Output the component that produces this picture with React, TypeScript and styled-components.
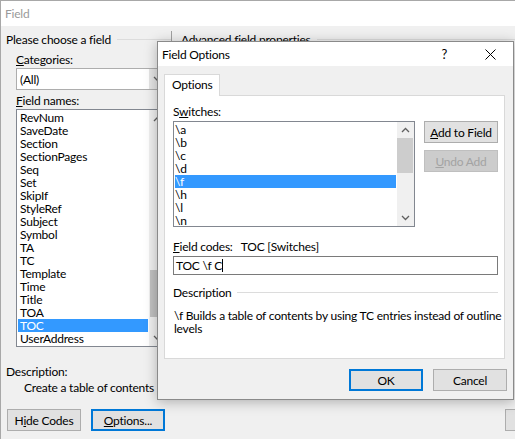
import styled, { createGlobalStyle } from "styled-components";

const GlobalStyle = createGlobalStyle`
  html, body {
    margin: 0;
    padding: 0;
    overflow: hidden;
  }
  body {
    font-family: Lato, "Noto Sans", sans-serif;
    font-size: 12px;
    letter-spacing: -0.22px;
    color: #000;
  }
  * {
    box-sizing: border-box;
  }
`;

const fieldNames = [
  "RevNum",
  "SaveDate",
  "Section",
  "SectionPages",
  "Seq",
  "Set",
  "SkipIf",
  "StyleRef",
  "Subject",
  "Symbol",
  "TA",
  "TC",
  "Template",
  "Time",
  "Title",
  "TOA",
  "TOC",
  "UserAddress",
];

const switches = ["\\a", "\\b", "\\c", "\\d", "\\f", "\\h", "\\l", "\\n"];

export default function App() {
  return (
    <>
      <GlobalStyle />
      <Window>
        <TitleBar $inactive>Field</TitleBar>
        <WindowBody>
          <Main>
            <LeftCol>
              <GroupHeader>
                <span>Please choose a field</span>
                <GroupLine />
              </GroupHeader>
              <Indent>
                <Label $top={5}>
                  <u>C</u>ategories:
                </Label>
                <Combo>
                  <ComboText>(All)</ComboText>
                  <ComboButton>
                    <Chevron down />
                  </ComboButton>
                </Combo>
                <Label $top={3}>
                  <u>F</u>ield names:
                </Label>
                <FieldList>
                  <Items>
                    {fieldNames.map((name) => (
                      <Item key={name} $selected={name === "TOC"}>
                        {name}
                      </Item>
                    ))}
                  </Items>
                  <ListScroll>
                    <ScrollArrow>
                      <Chevron />
                    </ScrollArrow>
                    <FieldTrack>
                      <FieldThumb />
                    </FieldTrack>
                    <ScrollArrow>
                      <Chevron down />
                    </ScrollArrow>
                  </ListScroll>
                </FieldList>
              </Indent>
              <Label $top={17}>Description:</Label>
              <DescLine>Create a table of contents</DescLine>
            </LeftCol>
            <VSeparator />
            <RightCol>
              <GroupHeader>
                <span>Advanced field properties</span>
                <GroupLine />
              </GroupHeader>
            </RightCol>
          </Main>
          <BottomRow>
            <Button>
              H<u>i</u>de Codes
            </Button>
            <Button $default>
              <u>O</u>ptions...
            </Button>
            <Spacer />
            <Button />
          </BottomRow>
        </WindowBody>

        <Dialog>
          <DialogTitleBar>
            <span>Field Options</span>
            <TitleIcons>
              <HelpMark>?</HelpMark>
              <CloseIcon width="11" height="11" viewBox="0 0 11 11">
                <path d="M0.5 0.5 L10.5 10.5 M10.5 0.5 L0.5 10.5" stroke="#000" strokeWidth="1" />
              </CloseIcon>
            </TitleIcons>
          </DialogTitleBar>
          <DialogBody>
            <Tab>Options</Tab>
            <TabPanel>
              <Label>
                S<u>w</u>itches:
              </Label>
              <SwitchRow>
                <SwitchList>
                  <Items>
                    {switches.map((s) => (
                      <Item key={s} $selected={s === "\\f"} $wide>
                        {s}
                      </Item>
                    ))}
                  </Items>
                  <SwitchScroll>
                    <ScrollArrow $tall>
                      <Chevron />
                    </ScrollArrow>
                    <SwitchTrack>
                      <SwitchThumb />
                    </SwitchTrack>
                    <ScrollArrow $tall>
                      <Chevron down />
                    </ScrollArrow>
                  </SwitchScroll>
                </SwitchList>
                <SideButtons>
                  <Button>
                    <u>A</u>dd to Field
                  </Button>
                  <Button disabled>
                    <u>U</u>ndo Add
                  </Button>
                </SideButtons>
              </SwitchRow>
              <Label $top={12}>
                <u>F</u>ield codes:&nbsp;&nbsp; TOC [Switches]
              </Label>
              <CodeInput>
                TOC \f C<Caret />
              </CodeInput>
              <GroupHeader $top={10}>
                <span>Description</span>
                <GroupLine />
              </GroupHeader>
              <DescText>
                <div>\f Builds a table of contents by using TC entries instead of outline</div>
                <div>levels</div>
              </DescText>
            </TabPanel>
            <DialogFooter>
              <Button $default>OK</Button>
              <Button>Cancel</Button>
            </DialogFooter>
          </DialogBody>
        </Dialog>
      </Window>
    </>
  );
}

function Chevron({ down }: { down?: boolean }) {
  return (
    <svg width="9" height="6" viewBox="0 0 9 6">
      <path
        d={down ? "M1 1 L4.5 4.5 L8 1" : "M1 5 L4.5 1.5 L8 5"}
        fill="none"
        stroke="#606060"
        strokeWidth="1.3"
      />
    </svg>
  );
}

const Window = styled.div`
  position: relative;
  width: 515px;
  height: 439px;
  border-top: 1px solid #a8a8a8;
  border-left: 1px solid #a8a8a8;
  display: flex;
  flex-direction: column;
  overflow: hidden;
`;

const TitleBar = styled.div<{ $inactive?: boolean }>`
  height: 25px;
  line-height: 25px;
  padding-left: 4px;
  background: #fff;
  color: ${(p) => (p.$inactive ? "#9a9a9a" : "#000")};
`;

const WindowBody = styled.div`
  flex: 1;
  background: #f0f0f0;
  display: flex;
  flex-direction: column;
`;

const Main = styled.div`
  display: flex;
  padding-top: 6px;
`;

const LeftCol = styled.div`
  width: 170px;
  padding-left: 5px;
  flex-shrink: 0;
`;

const RightCol = styled.div`
  flex: 1;
  padding-left: 9px;
`;

const VSeparator = styled.div`
  width: 1px;
  background: #a0a0a0;
  margin-top: -1px;
  height: 60px;
`;

const GroupHeader = styled.div<{ $top?: number }>`
  display: flex;
  align-items: center;
  gap: 6px;
  height: 15px;
  line-height: 15px;
  margin-top: ${(p) => p.$top ?? 0}px;
  white-space: nowrap;
`;

const GroupLine = styled.div`
  flex: 1;
  border-top: 1px solid #dcdcdc;
`;

const Indent = styled.div`
  padding-left: 10px;
`;

const Label = styled.div<{ $top?: number }>`
  height: 15px;
  line-height: 15px;
  margin-top: ${(p) => p.$top ?? 0}px;
  white-space: nowrap;
`;

const Combo = styled.div`
  margin-top: 1px;
  width: 151px;
  height: 22px;
  border: 1px solid #adadad;
  background: #fff;
  display: flex;
  align-items: center;
`;

const ComboText = styled.div`
  flex: 1;
  padding-left: 3px;
`;

const ComboButton = styled.div`
  width: 17px;
  height: 100%;
  background: #e5e5e5;
  display: flex;
  align-items: center;
  justify-content: center;
`;

const FieldList = styled.div`
  margin-top: 1px;
  width: 151px;
  height: 238px;
  border: 1px solid #828790;
  background: #fff;
  display: flex;
`;

const Items = styled.div`
  flex: 1;
  padding: 1px 1px 0 1px;
`;

const Item = styled.div<{ $selected?: boolean; $wide?: boolean }>`
  height: 13px;
  line-height: 13px;
  padding-left: ${(p) => (p.$wide ? 0 : 2)}px;
  background: ${(p) => (p.$selected ? "#3399ff" : "transparent")};
  color: ${(p) => (p.$selected ? "#fff" : "#000")};
  white-space: nowrap;
`;

const ListScroll = styled.div`
  width: 17px;
  background: #f0f0f0;
  display: flex;
  flex-direction: column;
`;

const ScrollArrow = styled.div<{ $tall?: boolean }>`
  height: ${(p) => (p.$tall ? 16 : 17)}px;
  display: flex;
  align-items: center;
  justify-content: center;
`;

const FieldTrack = styled.div`
  flex: 1;
  position: relative;
`;

const FieldThumb = styled.div`
  position: absolute;
  left: 1px;
  right: 1px;
  top: 143px;
  height: 47px;
  background: #c1c1c1;
`;

const DescLine = styled.div`
  height: 15px;
  line-height: 15px;
  padding-left: 18px;
  margin-top: 1px;
  white-space: nowrap;
`;

const BottomRow = styled.div`
  display: flex;
  gap: 10px;
  padding-left: 6px;
  margin-top: 14px;
`;

const Spacer = styled.div`
  width: 320px;
  flex-shrink: 0;
`;

const Button = styled.button<{ $default?: boolean }>`
  width: 74px;
  height: 22px;
  flex-shrink: 0;
  padding: 0;
  font: inherit;
  letter-spacing: inherit;
  color: #000;
  background: #e1e1e1;
  border: ${(p) => (p.$default ? "2px solid #0078d7" : "1px solid #adadad")};
  white-space: nowrap;
  &:disabled {
    background: #cccccc;
    border-color: #bfbfbf;
    color: #a3a3a3;
  }
`;

const Dialog = styled.div`
  position: absolute;
  left: 156px;
  top: 40px;
  width: 357px;
  height: 359px;
  border: 1px solid #8a8a8a;
  background: #f0f0f0;
  box-shadow: 0 2px 12px rgba(0, 0, 0, 0.28);
  display: flex;
  flex-direction: column;
`;

const DialogTitleBar = styled.div`
  height: 24px;
  background: #fff;
  display: flex;
  align-items: center;
  justify-content: space-between;
  padding-left: 4px;
`;

const TitleIcons = styled.div`
  display: flex;
  align-items: center;
  gap: 38px;
  padding-right: 17px;
`;

const HelpMark = styled.span`
  font-size: 13px;
`;

const CloseIcon = styled.svg`
  display: block;
`;

const DialogBody = styled.div`
  flex: 1;
  padding: 8px 6px 0 6px;
  display: flex;
  flex-direction: column;
`;

const Tab = styled.div`
  width: 56px;
  height: 22px;
  line-height: 20px;
  padding-left: 7px;
  background: #fff;
  border: 1px solid #d9d9d9;
  border-bottom: none;
  position: relative;
  z-index: 1;
`;

const TabPanel = styled.div`
  margin-top: -1px;
  width: 341px;
  height: 264px;
  background: #fff;
  border: 1px solid #d9d9d9;
  padding: 8px 6px 0 8px;
`;

const SwitchRow = styled.div`
  display: flex;
  gap: 9px;
  margin-top: 2px;
`;

const SwitchList = styled.div`
  width: 242px;
  height: 106px;
  border: 1px solid #828790;
  background: #fff;
  display: flex;
`;

const SwitchScroll = styled.div`
  width: 17px;
  background: #f0f0f0;
  display: flex;
  flex-direction: column;
`;

const SwitchTrack = styled.div`
  flex: 1;
  position: relative;
`;

const SwitchThumb = styled.div`
  position: absolute;
  left: 0;
  right: 1px;
  top: 0;
  height: 35px;
  background: #cdcdcd;
`;

const SideButtons = styled.div`
  display: flex;
  flex-direction: column;
  gap: 7px;
`;

const CodeInput = styled.div`
  margin-top: 2px;
  width: 325px;
  height: 19px;
  line-height: 17px;
  border: 1px solid #7a7a7a;
  padding-left: 2px;
  background: #fff;
  display: flex;
  align-items: center;
  white-space: pre;
`;

const Caret = styled.span`
  display: inline-block;
  width: 1px;
  height: 13px;
  background: #000;
`;

const DescText = styled.div`
  margin-top: 9px;
  padding-left: 1px;
  line-height: 13px;
  white-space: nowrap;
`;

const DialogFooter = styled.div`
  display: flex;
  justify-content: flex-end;
  gap: 10px;
  margin-top: 10px;
`;
